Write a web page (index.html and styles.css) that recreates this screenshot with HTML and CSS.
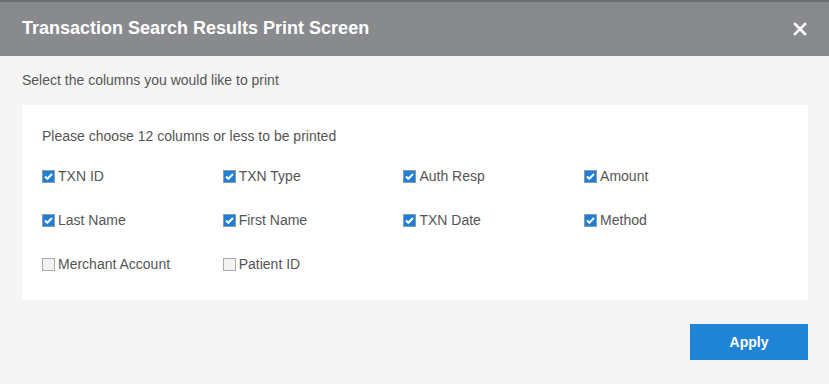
FILE: index.html
```html
<!DOCTYPE html>
<html>
<head>
<meta charset="utf-8">
<link rel="stylesheet" href="styles.css">
</head>
<body>
<div class="dialog">
  <div class="header">
    <h1 class="title">Transaction Search Results Print Screen</h1>
    <button class="close" aria-label="Close">
      <svg width="14" height="14" viewBox="0 0 14 14"><path d="M2 2 L12 12 M12 2 L2 12" stroke="#fff" stroke-width="2.6" stroke-linecap="square"/></svg>
    </button>
  </div>
  <div class="body">
    <p class="intro">Select the columns you would like to print</p>
    <div class="panel">
      <p class="note">Please choose 12 columns or less to be printed</p>
      <div class="grid">
        <label class="opt"><span class="box on"><svg width="11" height="11" viewBox="0 0 11 11"><path d="M2 5.5 L4.3 7.8 L9 3" fill="none" stroke="#fff" stroke-width="2"/></svg></span>TXN ID</label>
        <label class="opt"><span class="box on"><svg width="11" height="11" viewBox="0 0 11 11"><path d="M2 5.5 L4.3 7.8 L9 3" fill="none" stroke="#fff" stroke-width="2"/></svg></span>TXN Type</label>
        <label class="opt"><span class="box on"><svg width="11" height="11" viewBox="0 0 11 11"><path d="M2 5.5 L4.3 7.8 L9 3" fill="none" stroke="#fff" stroke-width="2"/></svg></span>Auth Resp</label>
        <label class="opt"><span class="box on"><svg width="11" height="11" viewBox="0 0 11 11"><path d="M2 5.5 L4.3 7.8 L9 3" fill="none" stroke="#fff" stroke-width="2"/></svg></span>Amount</label>
        <label class="opt"><span class="box on"><svg width="11" height="11" viewBox="0 0 11 11"><path d="M2 5.5 L4.3 7.8 L9 3" fill="none" stroke="#fff" stroke-width="2"/></svg></span>Last Name</label>
        <label class="opt"><span class="box on"><svg width="11" height="11" viewBox="0 0 11 11"><path d="M2 5.5 L4.3 7.8 L9 3" fill="none" stroke="#fff" stroke-width="2"/></svg></span>First Name</label>
        <label class="opt"><span class="box on"><svg width="11" height="11" viewBox="0 0 11 11"><path d="M2 5.5 L4.3 7.8 L9 3" fill="none" stroke="#fff" stroke-width="2"/></svg></span>TXN Date</label>
        <label class="opt"><span class="box on"><svg width="11" height="11" viewBox="0 0 11 11"><path d="M2 5.5 L4.3 7.8 L9 3" fill="none" stroke="#fff" stroke-width="2"/></svg></span>Method</label>
        <label class="opt"><span class="box"></span>Merchant Account</label>
        <label class="opt"><span class="box"></span>Patient ID</label>
      </div>
    </div>
    <div class="actions">
      <button class="apply">Apply</button>
    </div>
  </div>
</div>
</body>
</html>
```
FILE: styles.css
```css
html, body {
  margin: 0;
  padding: 0;
}
body {
  background: #6b6c70;
  font-family: "Liberation Sans", Arial, sans-serif;
  width: 829px;
  height: 384px;
  overflow: hidden;
}
.dialog {
  margin-top: 2px;
  background: #f5f5f5;
  height: 382px;
}
.header {
  background: #898a8e;
  height: 54px;
  display: flex;
  align-items: center;
  justify-content: space-between;
  padding: 0 22px;
}
.title {
  margin: 0;
  color: #fff;
  font-size: 18px;
  font-weight: bold;
  position: relative;
  top: -1px;
}
.close {
  background: none;
  border: 0;
  padding: 0;
  width: 14px;
  height: 14px;
  display: flex;
  cursor: pointer;
}
.body {
  padding: 16px 21px 0 22px;
}
.intro {
  margin: 0 0 17px;
  font-size: 14px;
  line-height: 16px;
  color: #555;
}
.panel {
  background: #fff;
  padding: 23px 20px 16px;
  height: 156px;
}
.note {
  margin: 0 0 24px;
  font-size: 14px;
  line-height: 16px;
  color: #555;
}
.grid {
  display: grid;
  grid-template-columns: repeat(4, 180.7px);
  row-gap: 28px;
}
.opt {
  display: flex;
  align-items: center;
  font-size: 14px;
  line-height: 16px;
  color: #555;
  gap: 3px;
}
.box {
  width: 11px;
  height: 11px;
  border: 1px solid #a9a9a9;
  background: #f3f3f3;
  display: flex;
  flex: none;
}
.box.on {
  background: #1e7fd8;
  border-color: #8e9aa6;
}
.actions {
  display: flex;
  justify-content: flex-end;
  padding-top: 24px;
}
.apply {
  width: 118px;
  height: 36px;
  background: #1f83d6;
  color: #fff;
  border: 0;
  font-family: "Liberation Sans", Arial, sans-serif;
  font-size: 14px;
  font-weight: bold;
}
```
